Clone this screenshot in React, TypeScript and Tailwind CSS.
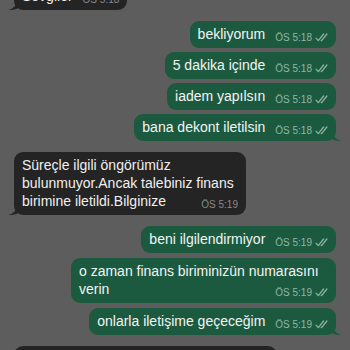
import React from "react";

const Checks = () => (
  <svg width="13" height="9" viewBox="0 0 13 9" className="inline-block ml-[3px] -mt-[2px]">
    <path d="M1 5.2 L3.3 7.6 L8.6 1" stroke="#8fb6a4" strokeWidth="1.2" fill="none" strokeLinecap="round" strokeLinejoin="round" />
    <path d="M6.2 7.4 L6.6 7.6 L11.9 1" stroke="#8fb6a4" strokeWidth="1.2" fill="none" strokeLinecap="round" strokeLinejoin="round" />
  </svg>
);

const OutTail = () => (
  <svg width="10" height="12" viewBox="0 0 10 12" className="absolute -right-[6px] bottom-0">
    <path d="M0 0 C1 6 3 10 9.5 12 C5 12 2 11.5 0 10 Z" fill="#1c5a40" />
  </svg>
);

const InTail = () => (
  <svg width="10" height="12" viewBox="0 0 10 12" className="absolute -left-[6px] bottom-0">
    <path d="M10 0 C9 6 7 10 0.5 12 C5 12 8 11.5 10 10 Z" fill="#242424" />
  </svg>
);

function Out({ text, time, tail }: { text: string; time: string; tail?: boolean }) {
  return (
    <div className="flex justify-end">
      <div className="relative max-w-[265px] rounded-[9px] bg-[#1c5a40] px-[8px] pt-[4px] pb-[5px] text-[14px] leading-[18px] text-[#f2f5f3]">
        <span>{text}</span>
        <span className="float-right ml-[10px] relative top-[4px] text-[10px] leading-[18px] text-[#8fb6a4] whitespace-nowrap">
          {time}
          <Checks />
        </span>
        {tail && <OutTail />}
      </div>
    </div>
  );
}

function In({ text, time, tail, cls }: { text: string; time: string; tail?: boolean; cls?: string }) {
  return (
    <div className="flex justify-start">
      <div className={"relative rounded-[9px] bg-[#242424] px-[8px] pt-[4px] pb-[5px] text-[14px] leading-[18px] text-[#f0f0f0] " + (cls ?? "max-w-[232px]")}>
        <span>{text}</span>
        <span className="float-right ml-[10px] relative top-[4px] text-[10px] leading-[18px] text-[#8a8a8a] whitespace-nowrap">
          {time}
        </span>
        {tail && <InTail />}
      </div>
    </div>
  );
}

export default function App() {
  return (
    <div
      className="w-[350px] h-[350px] overflow-hidden bg-[#5d5d5d]"
      style={{ fontFamily: '"Liberation Sans", Arial, sans-serif' }}
    >
      <div className="-mt-[17px] flex flex-col px-[14px]">
        <In text="Sevgiler" time="ÖS 5:18" tail />
        <div className="h-[11px]" />
        <div className="flex flex-col gap-[4px]">
          <Out text="bekliyorum" time="ÖS 5:18" />
          <Out text="5 dakika içinde" time="ÖS 5:18" />
          <Out text="iadem yapılsın" time="ÖS 5:18" />
          <Out text="bana dekont iletilsin" time="ÖS 5:18" tail />
        </div>
        <div className="h-[11px]" />
        <In text="Süreçle ilgili öngörümüz bulunmuyor.Ancak talebiniz finans birimine iletildi.Bilginize" time="ÖS 5:19" tail />
        <div className="h-[11px]" />
        <div className="flex flex-col gap-[5px]">
          <Out text="beni ilgilendirmiyor" time="ÖS 5:19" />
          <Out text="o zaman finans biriminizün numarasını verin" time="ÖS 5:19" />
          <Out text="onlarla iletişime geçeceğim" time="ÖS 5:19" tail />
        </div>
        <div className="h-[11px]" />
        <In text="" time="" cls="w-[263px] h-[40px]" />
      </div>
    </div>
  );
}
